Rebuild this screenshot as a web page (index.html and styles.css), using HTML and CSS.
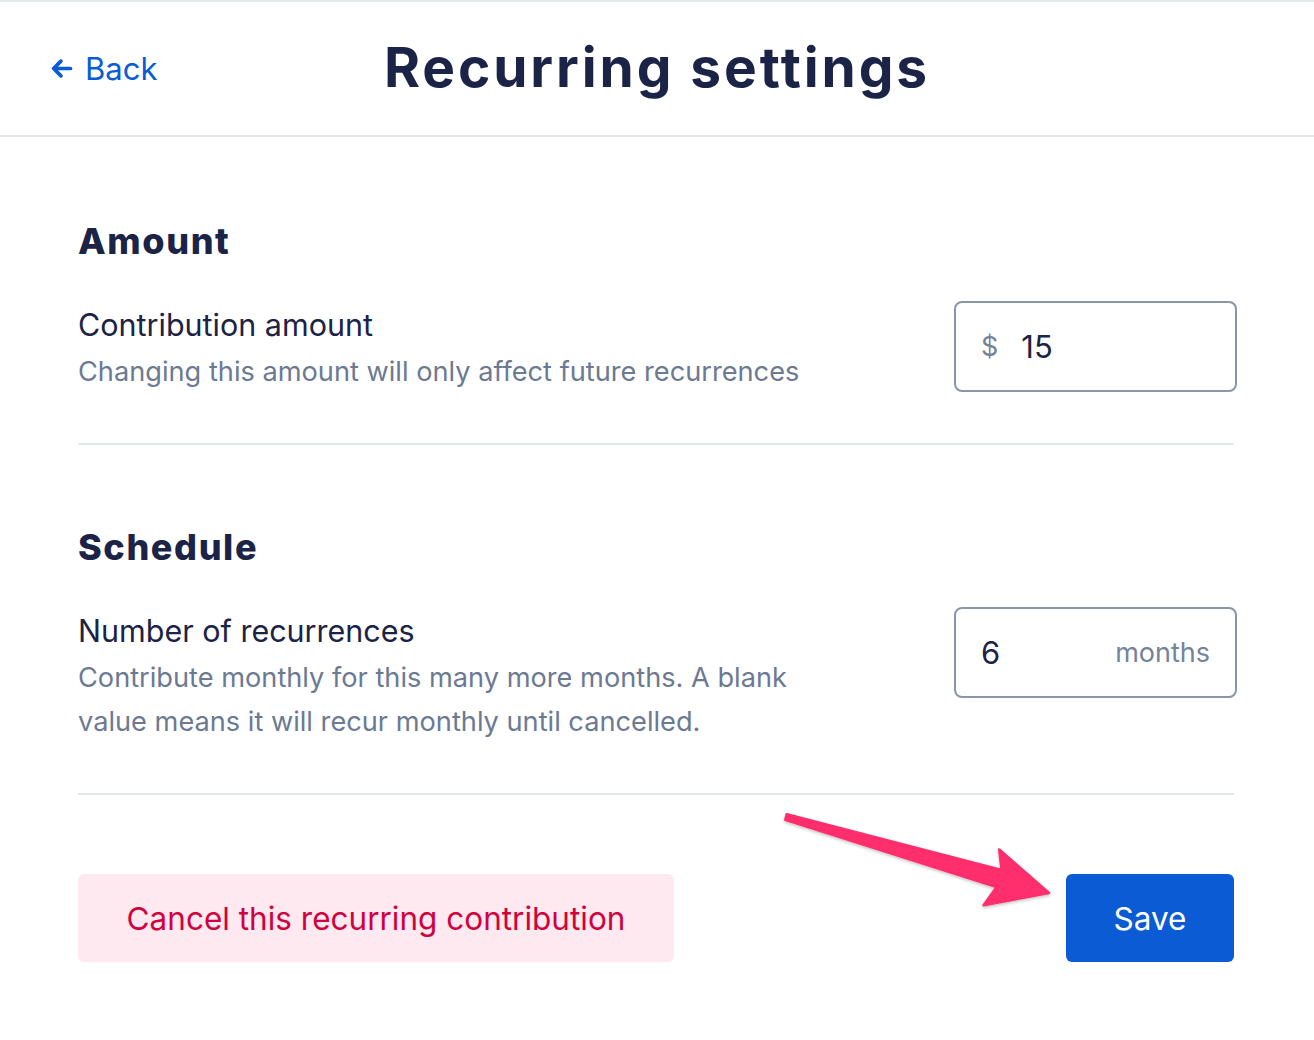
FILE: index.html
```html
<!DOCTYPE html>
<html lang="en">
<head>
<meta charset="utf-8">
<title>Recurring settings</title>
<link rel="stylesheet" href="styles.css">
</head>
<body>
<div class="page">
  <header class="topbar">
    <a class="back" href="#">
      <svg class="back-icon" viewBox="0 0 24 24" width="27" height="27" aria-hidden="true">
        <path d="M20 12H5M11.5 5.5L5 12l6.5 6.5" fill="none" stroke="currentColor" stroke-width="3.3" stroke-linecap="round" stroke-linejoin="round"/>
      </svg>
      <span>Back</span>
    </a>
    <h1 class="title">Recurring settings</h1>
    <div class="spacer"></div>
  </header>

  <main class="content">
    <section class="section">
      <h2 class="section-title">Amount</h2>
      <div class="row">
        <div class="field-text">
          <div class="label">Contribution amount</div>
          <div class="desc">Changing this amount will only affect future recurrences</div>
        </div>
        <div class="input">
          <span class="prefix">$</span>
          <span class="value">15</span>
        </div>
      </div>
    </section>

    <section class="section">
      <h2 class="section-title">Schedule</h2>
      <div class="row">
        <div class="field-text">
          <div class="label">Number of recurrences</div>
          <div class="desc">Contribute monthly for this many more months. A blank value means it will recur monthly until cancelled.</div>
        </div>
        <div class="input input-suffix">
          <span class="value">6</span>
          <span class="suffix">months</span>
        </div>
      </div>
    </section>

    <div class="actions">
      <button class="btn btn-cancel" type="button">Cancel this recurring contribution</button>
      <button class="btn btn-save" type="button">Save</button>
    </div>
  </main>

  <svg class="annotation" viewBox="770 800 300 120" width="300" height="120" aria-hidden="true">
    <defs>
      <filter id="sh" x="-10%" y="-30%" width="120%" height="160%">
        <feDropShadow dx="0" dy="1.5" stdDeviation="1.5" flood-color="#000" flood-opacity="0.25"/>
      </filter>
    </defs>
    <polygon filter="url(#sh)" fill="#ff2d6d" stroke="#ff2d6d" stroke-width="2.5" stroke-linejoin="round"
      points="786.7,814.2 1001.6,869.9 999.2,849.4 1049,893 983.6,905.2 996.6,887.1 785.3,819.8"/>
  </svg>
</div>
</body>
</html>
```

FILE: styles.css
```css
* { box-sizing: border-box; }

html, body {
  margin: 0;
  padding: 0;
  background: #ffffff;
}

body {
  font-family: "Inter", "Liberation Sans", sans-serif;
  color: #1c2346;
}

.page {
  position: relative;
  width: 1314px;
  min-height: 1040px;
  border-top: 2px solid #e4e7eb;
}

.topbar {
  display: grid;
  grid-template-columns: 1fr auto 1fr;
  align-items: center;
  height: 135px;
  border-bottom: 2px solid #e4e7eb;
  padding: 0 48px;
}

.back {
  display: flex;
  align-items: center;
  gap: 10px;
  color: #0b5bd5;
  text-decoration: none;
  font-size: 31px;
  justify-self: start;
}

.back-icon { display: block; }

.title {
  margin: 0;
  font-size: 55px;
  font-weight: 700;
  letter-spacing: 2.9px;
  color: #1b2346;
  line-height: 1;
  padding-bottom: 2px;
}

.content {
  padding: 0 80px 0 78px;
}

.section {
  padding-top: 84px;
  padding-bottom: 49px;
  border-bottom: 2px solid #e3e6ea;
}

.section + .section { padding-top: 82px; }

.section-title {
  margin: 0 0 40px;
  font-size: 36px;
  line-height: 40px;
  font-weight: 800;
  letter-spacing: 1.6px;
  color: #1b2346;
}

.row {
  display: flex;
  justify-content: space-between;
  align-items: flex-start;
}

.field-text {
  width: 760px;
}

.label {
  font-size: 30.5px;
  line-height: 48px;
  color: #1c2346;
}

.desc {
  font-size: 27.2px;
  line-height: 44px;
  color: #6b7a92;
  margin-top: 1px;
}

.input {
  display: flex;
  align-items: center;
  width: 283px;
  height: 91px;
  margin-right: -3px;
  border: 2px solid #8a95a8;
  border-radius: 8px;
  padding: 0 25px;
  font-size: 31px;
}

.prefix {
  color: #75839a;
  font-size: 27px;
  margin-right: 23px;
}

.value { color: #1c2346; }

.input-suffix { justify-content: space-between; }

.suffix {
  color: #75839a;
  font-size: 27px;
}

.actions {
  display: flex;
  justify-content: space-between;
  padding-top: 79px;
}

.btn {
  height: 88px;
  border: none;
  border-radius: 6px;
  font-family: "Inter", "Liberation Sans", sans-serif;
  font-size: 31.5px;
  cursor: pointer;
}

.btn-cancel {
  width: 596px;
  background: #fde9ef;
  color: #d0023e;
}

.btn-save {
  width: 168px;
  background: #0b5bd5;
  color: #ffffff;
}

.annotation {
  position: absolute;
  left: 770px;
  top: 798px;
  pointer-events: none;
}
```
